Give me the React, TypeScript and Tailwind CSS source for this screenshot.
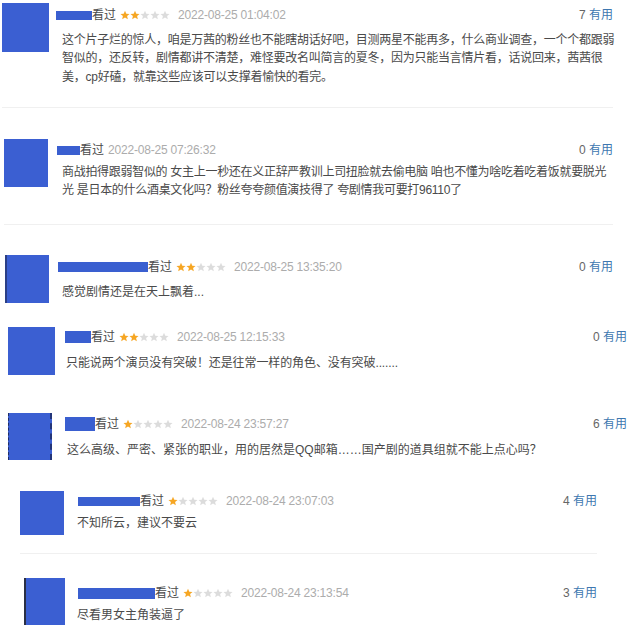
import React from "react";

interface Review {
  id: number;
  wrap: string;
  avatar: string;
  gap: string;
  nameBox: string;
  header: string;
  body: string;
  stars: number;
  time: string;
  useful: number;
  lines: string[];
}

const reviews: Review[] = [
  {
    id: 1,
    wrap: "ml-[2px] w-[611px] h-[108px] pt-[3px] border-b border-[#f0f0f0]",
    avatar: "w-[47px] h-[49px]",
    gap: "gap-[13px]",
    nameBox: "-ml-[6px] w-[36px] h-[9px]",
    header: "mt-[2px]",
    body: "mt-[5.5px] tracking-[-0.25px]",
    stars: 2,
    time: "2022-08-25 01:04:02",
    useful: 7,
    lines: [
      "这个片子烂的惊人，咱是万茜的粉丝也不能瞎胡话好吧，目测两星不能再多，什么商业调查，一个个都跟弱",
      "智似的，还反转，剧情都讲不清楚，难怪要改名叫简言的夏冬，因为只能当言情片看，话说回来，茜茜很",
      "美，cp好磕，就靠这些应该可以支撑着愉快的看完。",
    ],
  },
  {
    id: 2,
    wrap: "ml-[4px] w-[609px] h-[117px] pt-[31px] border-b border-[#f0f0f0]",
    avatar: "w-[44px] h-[48px]",
    gap: "gap-[14px]",
    nameBox: "-ml-[5px] w-[23px] h-[9px]",
    header: "mt-[1px]",
    body: "mt-[2.5px] tracking-[-0.3px]",
    stars: 0,
    time: "2022-08-25 07:26:32",
    useful: 0,
    lines: [
      "商战拍得跟弱智似的 女主上一秒还在义正辞严教训上司扭脸就去偷电脑 咱也不懂为啥吃着吃着饭就要脱光",
      "光 是日本的什么酒桌文化吗？粉丝夸夸颜值演技得了 夸剧情我可要打96110了",
    ],
  },
  {
    id: 3,
    wrap: "ml-[5px] w-[608px] h-[95px] pt-[30px]",
    avatar: "w-[44px] h-[48px] border-l-2 border-[#2b3f86]",
    gap: "gap-[13px]",
    nameBox: "-ml-[4px] w-[90px] h-[10px]",
    header: "mt-[2px]",
    body: "mt-[5.5px]",
    stars: 2,
    time: "2022-08-25 13:35:20",
    useful: 0,
    lines: ["感觉剧情还是在天上飘着..."],
  },
  {
    id: 4,
    wrap: "ml-[8px] w-[619px] h-[85px] pt-[7px]",
    avatar: "w-[47px] h-[48px]",
    gap: "gap-[11px]",
    nameBox: "-ml-[1px] w-[26px] h-[12px]",
    header: "mt-0",
    body: "mt-[6.5px] tracking-[-0.1px]",
    stars: 2,
    time: "2022-08-25 12:15:33",
    useful: 0,
    lines: ["只能说两个演员没有突破！还是往常一样的角色、没有突破......."],
  },
  {
    id: 5,
    wrap: "ml-[8px] w-[619px] h-[70px] pt-[8px]",
    avatar: "w-[44px] h-[47px] border-l border-dashed border-[#1f2d66] border-r-2 border-r-[#22357a]",
    gap: "gap-[15px]",
    nameBox: "-ml-[2px] w-[30px] h-[14px]",
    header: "mt-[1px]",
    body: "mt-[6.5px]",
    stars: 1,
    time: "2022-08-24 23:57:27",
    useful: 6,
    lines: ["这么高级、严密、紧张的职业，用的居然是QQ邮箱……国产剧的道具组就不能上点心吗？"],
  },
  {
    id: 6,
    wrap: "ml-[20px] w-[577px] h-[79px] pt-[16px] border-b border-[#f0f0f0]",
    avatar: "w-[44px] h-[44px]",
    gap: "gap-[13px]",
    nameBox: "ml-[1px] w-[62px] h-[9px]",
    header: "mt-0",
    body: "mt-[2.5px]",
    stars: 1,
    time: "2022-08-24 23:07:03",
    useful: 4,
    lines: ["不知所云，建议不要云"],
  },
  {
    id: 7,
    wrap: "ml-[24px] w-[573px] h-[74px] pt-[24px]",
    avatar: "w-[41px] h-[47px] border-l-2 border-[#2a2f45]",
    gap: "gap-[12px]",
    nameBox: "ml-[1px] w-[77px] h-[11px]",
    header: "mt-[5px]",
    body: "mt-[2.5px]",
    stars: 1,
    time: "2022-08-24 23:13:54",
    useful: 3,
    lines: ["尽看男女主角装逼了"],
  },
];

function Stars({ count }: { count: number }) {
  return (
    <div className="flex items-center ml-[4px] mr-[8px]">
      {[0, 1, 2, 3, 4].map((i) => (
        <svg key={i} width="10" height="10" viewBox="0 0 24 24">
          <path
            d="M12 1.5l3.1 7.2 7.8.7-5.9 5.2 1.8 7.6L12 18.2l-6.8 4 1.8-7.6L1.1 9.4l7.8-.7z"
            fill={i < count ? "#f6a623" : "#dcdcdc"}
          />
        </svg>
      ))}
    </div>
  );
}

function ReviewItem({ r }: { r: Review }) {
  return (
    <div className={`box-border shrink-0 ${r.wrap}`}>
      <div className={`flex items-start ${r.gap}`}>
        <div className={`shrink-0 bg-[#3b5fd2] box-border ${r.avatar}`} />
        <div className="flex-1 min-w-0">
          <div className={`flex items-center h-[20px] ${r.header}`}>
            <div className={`shrink-0 bg-[#3a5fd0] ${r.nameBox}`} />
            <span className="text-[12px] text-[#4a4a4a]">看过</span>
            {r.stars > 0 ? <Stars count={r.stars} /> : <span className="w-[4px]" />}
            <span className="text-[12px] tracking-[-0.2px] text-[#acacac] font-['Liberation_Sans',sans-serif]">
              {r.time}
            </span>
            <span className="ml-auto text-[12px] whitespace-nowrap">
              <span className="text-[#666] font-['Liberation_Sans',sans-serif]">{r.useful}</span>{" "}
              <span className="text-[#3d77b0]">有用</span>
            </span>
          </div>
          <div className={`text-[12px] leading-[18.5px] text-[#4a4a4a] whitespace-nowrap ${r.body}`}>
            {r.lines.map((l, i) => (
              <div key={i}>{l}</div>
            ))}
          </div>
        </div>
      </div>
    </div>
  );
}

export default function App() {
  return (
    <div className="w-[640px] h-[628px] overflow-hidden bg-white flex flex-col font-['Liberation_Sans','Noto_Sans_CJK_SC',sans-serif]">
      {reviews.map((r) => (
        <ReviewItem key={r.id} r={r} />
      ))}
    </div>
  );
}
